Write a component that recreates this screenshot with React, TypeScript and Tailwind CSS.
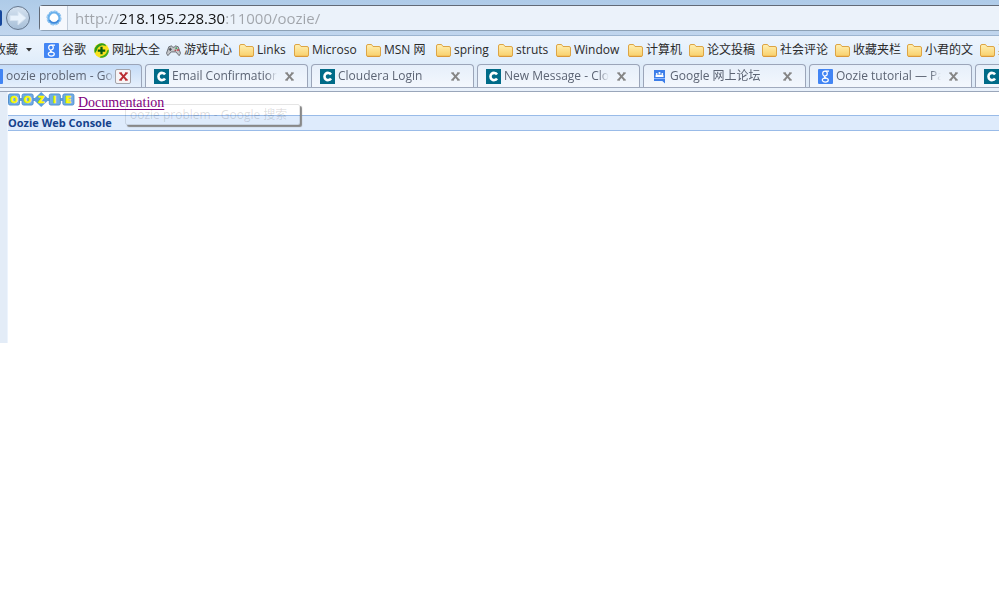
import { ReactNode } from 'react';
import { clsx } from 'clsx';

// ---------------------------------------------------------------------------
// Icons
// ---------------------------------------------------------------------------

function GoogleIcon() {
  return (
    <svg viewBox="0 0 15 15" className="size-[15px] shrink-0">
      <rect width="15" height="15" rx="1" fill="#4285f4" />
      <g fill="none" stroke="#fff" strokeWidth="1.2">
        <ellipse cx="7" cy="4.6" rx="2.3" ry="2.4" />
        <path d="M7.5 2.1H11M7.5 7c-2 .8-1 1.5.6 2.1" />
        <ellipse cx="7.3" cy="11.1" rx="3" ry="2" />
      </g>
    </svg>
  );
}

function PlusIcon() {
  return (
    <svg viewBox="0 0 16 16" className="size-[15px] shrink-0">
      <circle cx="8" cy="8" r="7.8" fill="#fbe21c" />
      <path d="M1 11A7.8 7.8 0 0 1 12 1.4L13 3.6A6.5 6.5 0 0 0 3 8Z" fill="#2f9e1c" />
      <path d="M15.7 7A7.8 7.8 0 0 1 6 15.5L7 14A7 7 0 0 0 14 8Z" fill="#3dab21" />
      <path d="M8 4V12M4 8H12" stroke="#075c10" strokeWidth="2.4" />
    </svg>
  );
}

function GamepadIcon() {
  return (
    <svg viewBox="0 0 16 13" className="h-[13px] w-[15px] shrink-0">
      <path d="M3 2.5 6 1.5 7 3H9L10 1.5 13 2.5 15.5 9.5 14 12 10.5 8H5.5L2 12 .5 9.5Z" fill="#c4c6c9" stroke="#686c72" strokeWidth="1" />
      <path d="M4.5 3.5V7M2.8 5.2H6.2" stroke="#454a51" strokeWidth="1.2" />
      <circle cx="11" cy="4" r="1.1" fill="#48a05b" />
      <circle cx="12.8" cy="6" r="1.1" fill="#c8414b" />
      <circle cx="10" cy="6.3" r="1" fill="#b05258" />
    </svg>
  );
}

function FolderIcon() {
  return (
    <svg viewBox="0 0 15 13" className="h-[13px] w-[15px] shrink-0">
      <defs>
        <linearGradient id="folder" x2="0" y2="1">
          <stop stopColor="#fff0b4" />
          <stop offset="1" stopColor="#f8cf69" />
        </linearGradient>
      </defs>
      <path d="M.5 2Q.5.5 2 .5H5.5L7 2.5H13Q14.5 2.5 14.5 4V11Q14.5 12.5 13 12.5H2Q.5 12.5.5 11Z" fill="url(#folder)" stroke="#dda545" />
      <path d="M1.5 12.3H13.5" stroke="#dc9738" />
    </svg>
  );
}

function ClouderaIcon() {
  return (
    <svg viewBox="0 0 15 15" className="size-[15px] shrink-0">
      <rect width="15" height="15" fill="#006b88" />
      <path d="M11 5.4A3.6 3.6 0 1 0 11 9.6" fill="none" stroke="#fff" strokeWidth="2.6" />
    </svg>
  );
}

function GroupsIcon() {
  return (
    <svg viewBox="0 0 15 15" className="size-[15px] shrink-0">
      <path d="M2 1H13V14.5L10.3 12H2Z" fill="#3b7de9" />
      <g fill="#fff">
        <circle cx="4.7" cy="5" r=".9" />
        <circle cx="7.5" cy="4" r="1.1" />
        <circle cx="10.3" cy="5" r=".9" />
        <path d="M3.5 6.2 7.5 5.5 11.5 6.2V8H3.5Z" />
      </g>
      <path d="M2 9.5H13" stroke="#90b9ff" />
    </svg>
  );
}

function CloseIcon({ active }: { active?: boolean }) {
  return (
    <svg viewBox="0 0 9 9" className="size-[9px]">
      <path d="M1.3.8 7.7 8.2M7.7.8 1.3 8.2" stroke={active ? '#b92c31' : '#858585'} strokeWidth="2" />
      <path d="M0 1H3M6 1H9M0 8H3M6 8H9" stroke={active ? '#b92c31' : '#858585'} />
    </svg>
  );
}

function OozieLogo() {
  const letters = ['O', 'O', 'Z', 'I', 'E'];
  return (
    <svg viewBox="0 0 67 15" className="h-[15px] w-[67px] shrink-0" role="img" aria-label="Oozie">
      <path d="M4 7.5H63" stroke="#5c9bd7" strokeWidth="3" />
      {letters.map((letter, i) => {
        const x = 6 + i * 13.6;
        return (
          <g key={i}>
            {i === 2 ? (
              <path d={`M${x} 0 ${x + 8} 7.5 ${x} 15 ${x - 8} 7.5Z`} fill="#5a9ee0" />
            ) : (
              <rect x={x - 5.5} y="2" width="11" height="11" rx="1.5" fill="#6fade6" stroke="#528fcd" />
            )}
            <text
              x={x}
              y="11"
              textAnchor="middle"
              fontFamily="DejaVu Sans, sans-serif"
              fontSize="9"
              fontWeight="700"
              fill="#fffb00"
              stroke="#fffb00"
              strokeWidth="0.5"
            >
              {letter}
            </text>
          </g>
        );
      })}
    </svg>
  );
}

// ---------------------------------------------------------------------------
// Data
// ---------------------------------------------------------------------------

const bookmarks: Array<{ label: string; icon: ReactNode; width: string }> = [
  { label: '谷歌', icon: <GoogleIcon />, width: 'w-[50px]' },
  { label: '网址大全', icon: <PlusIcon />, width: 'w-[72px]' },
  { label: '游戏中心', icon: <GamepadIcon />, width: 'w-[73px]' },
  { label: 'Links', icon: <FolderIcon />, width: 'w-[55px]' },
  { label: 'Microso', icon: <FolderIcon />, width: 'w-[72px]' },
  { label: 'MSN 网', icon: <FolderIcon />, width: 'w-[70px]' },
  { label: 'spring', icon: <FolderIcon />, width: 'w-[62px]' },
  { label: 'struts', icon: <FolderIcon />, width: 'w-[58px]' },
  { label: 'Window', icon: <FolderIcon />, width: 'w-[72px]' },
  { label: '计算机', icon: <FolderIcon />, width: 'w-[61px]' },
  { label: '论文投稿', icon: <FolderIcon />, width: 'w-[73px]' },
  { label: '社会评论', icon: <FolderIcon />, width: 'w-[73px]' },
  { label: '收藏夹栏', icon: <FolderIcon />, width: 'w-[72px]' },
  { label: '小君的文', icon: <FolderIcon />, width: 'w-[73px]' },
  { label: '其他', icon: <FolderIcon />, width: 'w-[73px]' },
];

const tabs: Array<{ title: string; icon: ReactNode; active?: boolean }> = [
  { title: 'oozie problem - Google', icon: <GoogleIcon />, active: true },
  { title: 'Email Confirmation', icon: <ClouderaIcon /> },
  { title: 'Cloudera Login', icon: <ClouderaIcon /> },
  { title: 'New Message - Cloudera', icon: <ClouderaIcon /> },
  { title: 'Google 网上论坛', icon: <GroupsIcon /> },
  { title: 'Oozie tutorial — Packt', icon: <GoogleIcon /> },
  { title: 'Cloudera', icon: <ClouderaIcon /> },
];

// ---------------------------------------------------------------------------
// Browser chrome
// ---------------------------------------------------------------------------

function AddressBar() {
  return (
    <div className="flex h-9 items-center border-b border-[#9cb5d0] bg-linear-to-b from-[#aecbe8] to-[#c1d6ee]">
      <button aria-label="Back" className="h-4 w-[2px] shrink-0 rounded-r-full bg-[#16479c]" />
      <button
        aria-label="Forward"
        className="ml-1 flex size-6 shrink-0 items-center justify-center rounded-full border border-[#66788e] bg-linear-to-b from-[#d5e2f0] to-[#a7bfd8]"
      >
        <svg viewBox="0 0 18 16" className="h-4 w-[18px]">
          <path d="M1 5.5H9V1L17 8 9 15V10.5H1Z" fill="#e8f2fc" stroke="#d4e2f0" />
        </svg>
      </button>
      <div className="ml-[9px] flex h-[26px] min-w-0 flex-1 items-center rounded-l-sm border border-r-0 border-[#626a76] border-b-[#8ea2b6] bg-[#ebf2fa]">
        <div className="flex h-full w-7 shrink-0 items-center justify-center border-r border-[#c1ccda] bg-[#f5f8fd]">
          <svg viewBox="0 0 16 16" className="size-4">
            <circle cx="8" cy="8" r="5.6" fill="#fff" stroke="#6bb1ec" strokeWidth="2.4" />
            <circle cx="8" cy="8" r="7.1" fill="none" stroke="#8fc3f0" strokeDasharray="4 1.5" />
            <path d="M3.5 10A5 5 0 0 0 12.5 10" fill="none" stroke="#3f86da" strokeWidth="1.4" />
          </svg>
        </div>
        <input
          aria-label="Address"
          defaultValue="http://218.195.228.30:11000/oozie/"
          className="ml-[7px] w-full min-w-0 bg-[linear-gradient(90deg,#a0a4aa_44px,#111_44px,#111_151px,#a0a4aa_151px)] bg-clip-text text-[15px] leading-6 text-transparent caret-black outline-none"
        />
      </div>
    </div>
  );
}

function BookmarksBar() {
  return (
    <nav className="flex h-7 items-center overflow-hidden bg-linear-to-b from-[#eef5fd] to-[#dfecfa] text-xs text-[#2a2a2a]">
      <button className="-ml-[6px] flex w-[50px] shrink-0 items-center gap-2 whitespace-nowrap">
        收藏
        <svg viewBox="0 0 6 4" className="h-1 w-[6px]">
          <path d="M0 0H6L3 3.5Z" fill="#333" />
        </svg>
      </button>
      {bookmarks.map((b) => (
        <a key={b.label} href="#" className={clsx('flex shrink-0 items-center gap-[3px] whitespace-nowrap', b.width)}>
          {b.icon}
          {b.label}
        </a>
      ))}
    </nav>
  );
}

function TabStrip() {
  return (
    <div className="overflow-hidden border-b border-[#9aa6ba] bg-[#e9f1fb] pb-[3px]">
      <div role="tablist" className="flex h-6 gap-[3px] border-b border-[#a0aabd] bg-[#dfebf8]">
        {tabs.map((t) => (
          <div
            key={t.title}
            role="tab"
            aria-selected={!!t.active}
            className={clsx(
              'flex w-[163px] shrink-0 items-center rounded-t-sm border border-b-0 border-[#9ba5b9] bg-linear-to-b pl-2',
              t.active ? '-ml-[21px] from-[#c5dcf7] to-[#e6f0fc] pr-[10px]' : 'from-[#e6effa] to-[#f3f7fd] pr-[11px]'
            )}
          >
            {t.icon}
            <span className="ml-[3px] min-w-0 flex-1 overflow-hidden mask-r-from-90% text-xs whitespace-nowrap text-[#5c6474]">
              {t.title}
            </span>
            <button
              aria-label={`Close ${t.title}`}
              className={clsx(
                'flex shrink-0 items-center justify-center',
                t.active ? 'h-[15px] w-4 rounded-xs border border-[#a3a3aa] bg-[#f7f4f5]' : 'ml-[6px] h-4 w-[13px]'
              )}
            >
              <CloseIcon active={t.active} />
            </button>
          </div>
        ))}
      </div>
    </div>
  );
}

export default function App() {
  return (
    <div className="min-h-screen overflow-hidden bg-white font-['Open_Sans','Noto_Sans_CJK_SC',sans-serif]">
      <header>
        <AddressBar />
        <BookmarksBar />
        <TabStrip />
      </header>
      <main className="flex h-[251px] border-l-[7px] border-[#e3ecf7]">
        <div className="relative min-w-0 flex-1 border-l border-[#edf4fd]">
          <div className="flex h-[23px] items-start gap-[3px]">
            <OozieLogo />
            <a href="#" className="font-['Liberation_Serif',serif] text-sm leading-[22px] text-[#800080] underline underline-offset-2">
              Documentation
            </a>
          </div>
          <h1 className="h-4 border-y border-[#99bbe8] bg-[#deebfc] text-[11px] leading-[14px] font-bold text-[#15428b]">
            Oozie Web Console
          </h1>
          <div
            role="tooltip"
            className="absolute top-3 left-[117px] h-[21px] min-w-[175px] rounded-xs border border-black/10 px-1 text-xs leading-[19px] whitespace-nowrap text-black/15 shadow-[2px_2px_1px_#888] [clip-path:inset(0_-4px_-4px_0)]"
          >
            oozie problem - Google 搜索
          </div>
        </div>
      </main>
    </div>
  );
}
